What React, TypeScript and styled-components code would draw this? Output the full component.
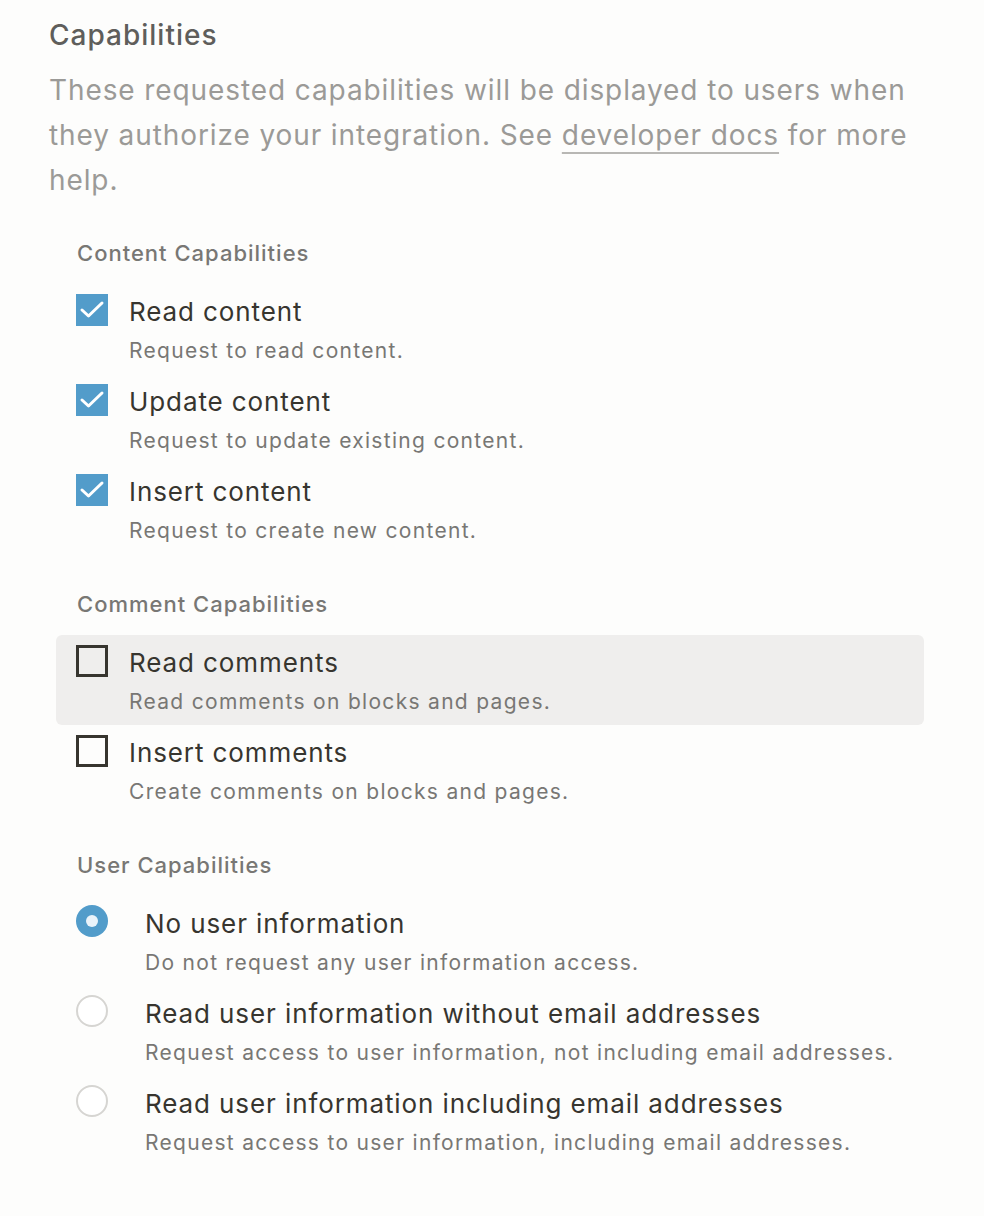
import styled, { createGlobalStyle } from 'styled-components'

const GlobalStyle = createGlobalStyle`
  body {
    margin: 0;
    background: #fdfdfc;
    font-family: Inter, "Noto Sans", sans-serif;
    -webkit-font-smoothing: antialiased;
  }
`

type CheckItem = { title: string; desc: string; checked: boolean; hovered?: boolean }

const contentItems: CheckItem[] = [
  { title: 'Read content', desc: 'Request to read content.', checked: true },
  { title: 'Update content', desc: 'Request to update existing content.', checked: true },
  { title: 'Insert content', desc: 'Request to create new content.', checked: true },
]

const commentItems: CheckItem[] = [
  { title: 'Read comments', desc: 'Read comments on blocks and pages.', checked: false, hovered: true },
  { title: 'Insert comments', desc: 'Create comments on blocks and pages.', checked: false },
]

const userItems = [
  { title: 'No user information', desc: 'Do not request any user information access.', selected: true },
  {
    title: 'Read user information without email addresses',
    desc: 'Request access to user information, not including email addresses.',
    selected: false,
  },
  {
    title: 'Read user information including email addresses',
    desc: 'Request access to user information, including email addresses.',
    selected: false,
  },
]

const App = () => {
  return (
    <>
      <GlobalStyle />
      <Page>
        <Title>Capabilities</Title>
        <Intro>
          These requested capabilities will be displayed to users when they authorize your integration. See{' '}
          <DocLink href="#">developer docs</DocLink> for more help.
        </Intro>

        <Section>
          <SectionHeader>Content Capabilities</SectionHeader>
          <List>
            {contentItems.map((item) => (
              <Option key={item.title} $hovered={item.hovered}>
                <Checkbox $checked={item.checked}>
                  {item.checked && (
                    <svg width="32" height="32" viewBox="0 0 32 32">
                      <polyline points="6,16 12.5,22 26,9" fill="none" stroke="#fff" strokeWidth="3" strokeLinecap="round" strokeLinejoin="round" />
                    </svg>
                  )}
                </Checkbox>
                <OptionText $gap={21}>
                  <OptionTitle>{item.title}</OptionTitle>
                  <OptionDesc>{item.desc}</OptionDesc>
                </OptionText>
              </Option>
            ))}
          </List>
        </Section>

        <Section>
          <SectionHeader>Comment Capabilities</SectionHeader>
          <List>
            {commentItems.map((item) => (
              <Option key={item.title} $hovered={item.hovered}>
                <Checkbox $checked={item.checked} />
                <OptionText $gap={21}>
                  <OptionTitle>{item.title}</OptionTitle>
                  <OptionDesc>{item.desc}</OptionDesc>
                </OptionText>
              </Option>
            ))}
          </List>
        </Section>

        <Section>
          <SectionHeader>User Capabilities</SectionHeader>
          <List>
            {userItems.map((item) => (
              <Option key={item.title}>
                <Radio $selected={item.selected} />
                <OptionText $gap={37}>
                  <OptionTitle>{item.title}</OptionTitle>
                  <OptionDesc>{item.desc}</OptionDesc>
                </OptionText>
              </Option>
            ))}
          </List>
        </Section>
      </Page>
    </>
  )
}

export default App

const Page = styled.div`
  width: 984px;
  min-height: 1216px;
  box-sizing: border-box;
  padding: 18px 40px 40px 49px;
`
const Title = styled.h2`
  margin: 0;
  font-size: 28px;
  font-weight: 500;
  line-height: 35px;
  letter-spacing: 1px;
  color: #5f5e5b;
`
const Intro = styled.p`
  margin: 15px 0 0;
  max-width: 880px;
  font-size: 28px;
  line-height: 45px;
  letter-spacing: 0.9px;
  color: #9b9a97;
`
const DocLink = styled.a`
  color: inherit;
  text-decoration: underline;
  text-decoration-color: rgba(55, 53, 47, 0.35);
  text-decoration-thickness: 2px;
  text-underline-offset: 7px;
`
const Section = styled.section`
  margin: 35px 0 0 7px;
  width: 868px;
`
const SectionHeader = styled.div`
  padding-left: 21px;
  font-size: 22px;
  font-weight: 500;
  line-height: 30px;
  letter-spacing: 1px;
  color: #787774;
`
const List = styled.div`
  display: flex;
  flex-direction: column;
  margin-top: 16px;
`
const Option = styled.div<{ $hovered?: boolean }>`
  display: flex;
  align-items: flex-start;
  height: 90px;
  box-sizing: border-box;
  padding: 8px 20px 7px;
  border-radius: 6px;
  background: ${(p) => (p.$hovered ? '#efeeed' : 'transparent')};
`
const Checkbox = styled.div<{ $checked: boolean }>`
  flex: none;
  width: 32px;
  height: 32px;
  margin-top: 2px;
  box-sizing: border-box;
  background: ${(p) => (p.$checked ? '#529cca' : 'transparent')};
  border: ${(p) => (p.$checked ? 'none' : '3px solid #37352f')};
  display: flex;
  align-items: center;
  justify-content: center;
`
const Radio = styled.div<{ $selected: boolean }>`
  flex: none;
  width: 32px;
  height: 32px;
  margin-top: 1px;
  box-sizing: border-box;
  border-radius: 50%;
  position: relative;
  background: ${(p) => (p.$selected ? '#529cca' : '#fff')};
  border: ${(p) => (p.$selected ? 'none' : '2px solid #d6d5d2')};

  &::after {
    content: '';
    display: ${(p) => (p.$selected ? 'block' : 'none')};
    position: absolute;
    left: 10px;
    top: 10px;
    width: 12px;
    height: 12px;
    border-radius: 50%;
    background: #eaf3fa;
  }
`
const OptionText = styled.div<{ $gap: number }>`
  display: flex;
  flex-direction: column;
  margin-left: ${(p) => p.$gap}px;
`
const OptionTitle = styled.div`
  font-size: 26px;
  line-height: 40px;
  letter-spacing: 0.9px;
  color: #37352f;
`
const OptionDesc = styled.div`
  margin-top: 3px;
  font-size: 21px;
  line-height: 32px;
  letter-spacing: 1.3px;
  color: #787774;
`
